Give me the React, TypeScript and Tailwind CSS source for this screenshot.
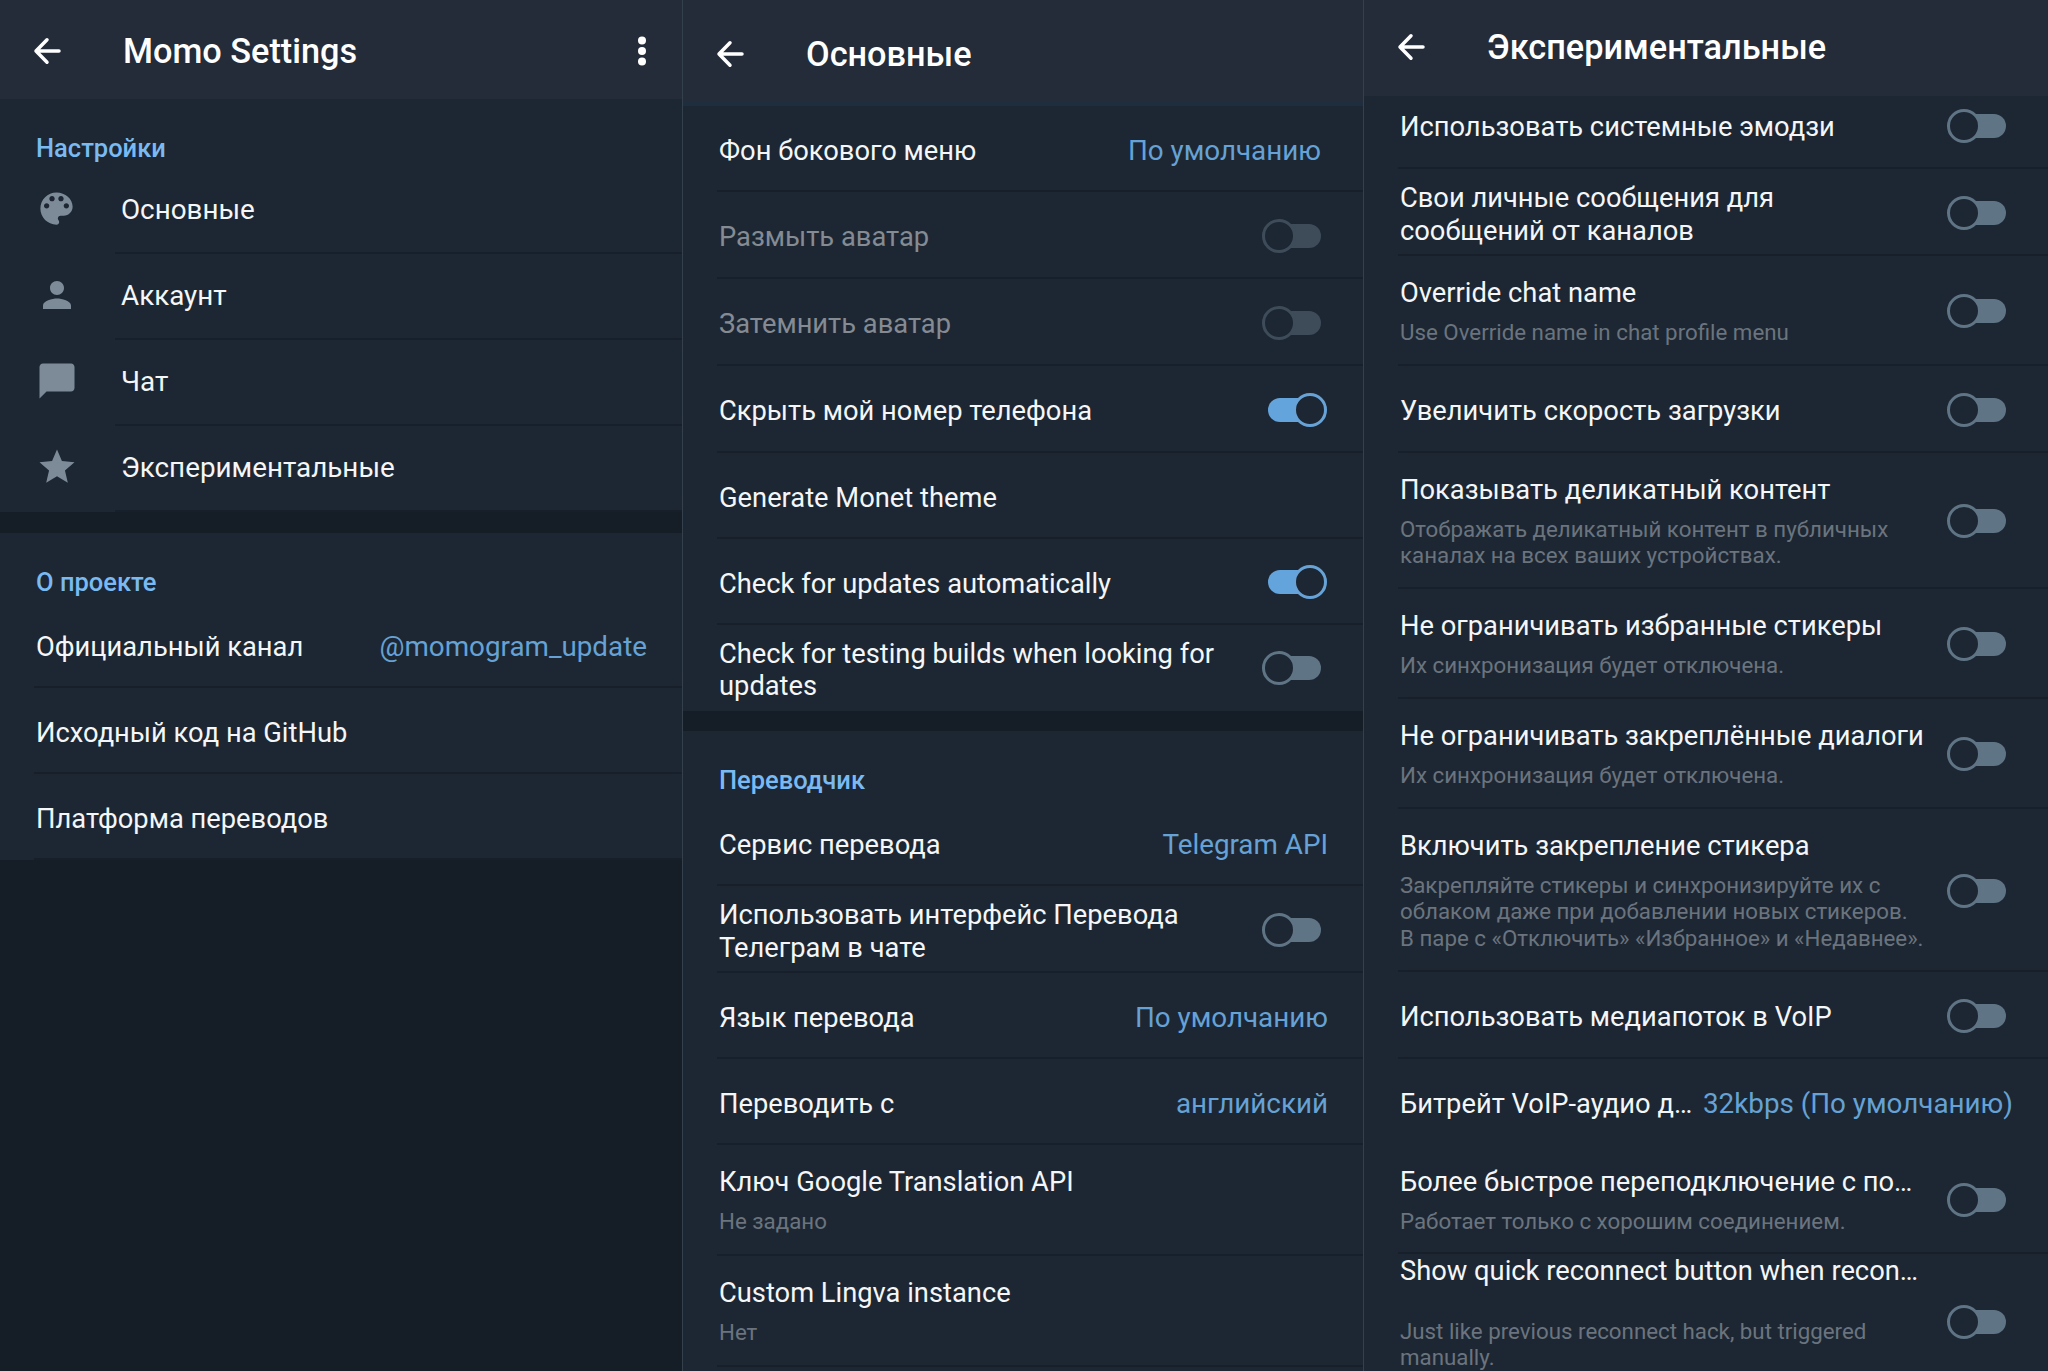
import type { ReactNode } from "react";
import { MdChatBubble, MdPerson, MdStar } from "react-icons/md";

interface Item {
  title: string;
  sub?: string;
  value?: string;
  toggle?: "on" | "off" | "disabled";
  height: string;
  bare?: boolean;
  top?: string;
  gap?: string;
  valueEnd?: string;
}

const mainItems = [
  { label: "Основные", icon: <PaletteIcon /> },
  { label: "Аккаунт", icon: <MdPerson size={42} /> },
  { label: "Чат", icon: <MdChatBubble size={42} /> },
  { label: "Экспериментальные", icon: <MdStar size={42} /> },
];

const aboutItems: Item[] = [
  { title: "Официальный канал", value: "@momogram_update", height: "h-[86px]" },
  { title: "Исходный код на GitHub", height: "h-[86px]" },
  { title: "Платформа переводов", height: "h-[86px]" },
];

const generalItems: Item[] = [
  { title: "Фон бокового меню", value: "По умолчанию", height: "h-[86px]", valueEnd: "mr-[6px]" },
  { title: "Размыть аватар", toggle: "disabled", height: "h-[87px]" },
  { title: "Затемнить аватар", toggle: "disabled", height: "h-[87px]" },
  { title: "Скрыть мой номер телефона", toggle: "on", height: "h-[87px]" },
  { title: "Generate Monet theme", height: "h-[86px]" },
  { title: "Check for updates automatically", toggle: "on", height: "h-[86px]" },
  { title: "Check for testing builds when looking for\nupdates", toggle: "off", height: "h-[86px]", bare: true },
];

const translatorItems: Item[] = [
  { title: "Сервис перевода", value: "Telegram API", height: "h-[86px]" },
  { title: "Использовать интерфейс Перевода\nТелеграм в чате", toggle: "off", height: "h-[87px]" },
  { title: "Язык перевода", value: "По умолчанию", height: "h-[86px]" },
  { title: "Переводить с", value: "английский", height: "h-[86px]" },
  { title: "Ключ Google Translation API", sub: "Не задано", height: "h-[111px]" },
  { title: "Custom Lingva instance", sub: "Нет", height: "h-[111px]" },
];

const experimentalItems: Item[] = [
  { title: "Использовать системные эмодзи", toggle: "off", height: "h-[87px]" },
  { title: "Свои личные сообщения для\nсообщений от каналов", toggle: "off", height: "h-[87px]" },
  { title: "Override chat name", sub: "Use Override name in chat profile menu", toggle: "off", height: "h-[110px]" },
  { title: "Увеличить скорость загрузки", toggle: "off", height: "h-[87px]" },
  {
    title: "Показывать деликатный контент",
    sub: "Отображать деликатный контент в публичных\nканалах на всех ваших устройствах.",
    toggle: "off",
    height: "h-[136px]",
  },
  { title: "Не ограничивать избранные стикеры", sub: "Их синхронизация будет отключена.", toggle: "off", height: "h-[110px]" },
  { title: "Не ограничивать закреплённые диалоги", sub: "Их синхронизация будет отключена.", toggle: "off", height: "h-[110px]" },
  {
    title: "Включить закрепление стикера",
    sub: "Закрепляйте стикеры и синхронизируйте их с\nоблаком даже при добавлении новых стикеров.\nВ паре с «Отключить» «Избранное» и «Недавнее».",
    toggle: "off",
    height: "h-[163px]",
  },
  { title: "Использовать медиапоток в VoIP", toggle: "off", height: "h-[87px]" },
  { title: "Битрейт VoIP-аудио д…", value: "32kbps (По умолчанию)", height: "h-[86px]", bare: true },
  { title: "Более быстрое переподключение с по…", sub: "Работает только с хорошим соединением.", toggle: "off", height: "h-[109px]" },
  {
    title: "Show quick reconnect button when recon…",
    sub: "Just like previous reconnect hack, but triggered\nmanually.",
    toggle: "off",
    height: "h-[136px]",
    top: "pt-px",
    gap: "mt-[30px]",
  },
];

function PaletteIcon() {
  return (
    <svg width="43" height="43" viewBox="0 0 24 24" fill="currentColor">
      <path d="M12 3c-4.97 0-9 4.03-9 9s4.03 9 9 9c.83 0 1.5-.67 1.5-1.5 0-.39-.15-.74-.39-1.01-.23-.26-.38-.61-.38-.99 0-.83.67-1.5 1.5-1.5H16c2.76 0 5-2.24 5-5 0-4.42-4.03-8-9-8zm-5.5 9c-.83 0-1.5-.67-1.5-1.5S5.67 9 6.5 9 8 9.67 8 10.5 7.33 12 6.5 12zm3-4C8.67 8 8 7.33 8 6.5S8.67 5 9.5 5s1.5.67 1.5 1.5S10.33 8 9.5 8zm5 0c-.83 0-1.5-.67-1.5-1.5S13.67 5 14.5 5s1.5.67 1.5 1.5S15.33 8 14.5 8zm3 4c-.83 0-1.5-.67-1.5-1.5S16.67 9 17.5 9s1.5.67 1.5 1.5-.67 1.5-1.5 1.5z" />
    </svg>
  );
}

function BackArrow() {
  return (
    <svg width="28" height="28" viewBox="0 0 28 28" fill="none" stroke="#fff" strokeWidth="3.5" strokeLinecap="round" strokeLinejoin="round">
      <path d="M26 14H3M14 2.8L3 14L14 25.2" />
    </svg>
  );
}

function Switch({ state }: { state: "on" | "off" | "disabled" }) {
  if (state === "on") {
    return (
      <div className="relative flex h-[34px] w-[59px] shrink-0 items-center">
        <div className="h-6 w-11 rounded-full bg-[#64a4dc]" />
        <div className="absolute top-0 right-0 size-[34px] rounded-full border-[3px] border-[#68a3d8] bg-[#1d2733]" />
      </div>
    );
  }
  const track = state === "off" ? "bg-[#5f7485]" : "bg-[#3e4c5a]";
  const ring = state === "off" ? "border-[#5f7485]" : "border-[#3e4c5a]";
  return (
    <div className="relative flex h-[34px] w-[59px] shrink-0 items-center justify-end">
      <div className={`h-6 w-11 rounded-full ${track}`} />
      <div className={`absolute top-0 left-0 size-[34px] rounded-full border-[3px] bg-[#1d2733] ${ring}`} />
    </div>
  );
}

function Header({ title, className, children }: { title: string; className: string; children?: ReactNode }) {
  return (
    <header className={`flex shrink-0 items-center bg-[#242c3a] pl-[33px] ${className}`}>
      <BackArrow />
      <h1 className="ml-[62px] text-[34.3px] leading-10 font-medium text-white">{title}</h1>
      {children}
    </header>
  );
}

function SectionTitle({ children }: { children: ReactNode }) {
  return <h2 className="h-[69px] pt-[33px] pl-9 text-[25.5px] leading-8 font-medium text-[#7abaf2]">{children}</h2>;
}

function Row({ item }: { item: Item }) {
  const color = item.toggle === "disabled" ? "text-[#858b93]" : "text-[#f4f6f8]";
  return (
    <div className={`relative flex shrink-0 pr-9 pl-9 ${item.height} ${item.sub ? "" : "items-center"}`}>
      <div className={item.sub ? (item.top ?? "pt-[21px]") : "pt-1"}>
        <div className={`text-[27.3px] leading-[32.5px] whitespace-pre ${color}`}>{item.title}</div>
        {item.sub && (
          <div className={`text-[22.3px] leading-[26.7px] whitespace-pre text-[#6b747e] ${item.gap ?? "mt-[9px]"}`}>{item.sub}</div>
        )}
      </div>
      {item.value && (
        <div className={`ml-auto pt-1 text-[27.8px] leading-[32.5px] whitespace-pre text-[#66a2d5] ${item.valueEnd ?? "-mr-px"}`}>{item.value}</div>
      )}
      {item.toggle && (
        <div className={`ml-auto self-center ${item.toggle === "on" ? "" : "mr-[6px]"}`}>
          <Switch state={item.toggle} />
        </div>
      )}
      {!item.bare && <div className="absolute right-0 bottom-0 left-[34px] h-0.5 bg-[#171f2a]" />}
    </div>
  );
}

export default function App() {
  return (
    <main className="flex h-[1371px] w-[2048px] overflow-hidden bg-[#151d27] font-[Roboto,sans-serif]">
      {/* Settings root */}
      <section className="flex w-[682px] shrink-0 flex-col">
        <Header title="Momo Settings" className="h-[99px] pt-[3px]">
          <svg className="mr-[35px] ml-auto" width="10" height="32" viewBox="0 0 10 32" fill="#fff">
            <circle cx="5" cy="5.5" r="4" />
            <circle cx="5" cy="16" r="4" />
            <circle cx="5" cy="26.5" r="4" />
          </svg>
        </Header>
        <div className="bg-[#1d2733]">
          <SectionTitle>Настройки</SectionTitle>
          {mainItems.map((item) => (
            <div key={item.label} className="relative flex h-[86px] items-center pb-[3px] text-[27.8px] text-[#f4f6f8]">
              <div className="flex w-[113px] justify-center pb-[2px] text-[#7d8b99]">{item.icon}</div>
              <span className="ml-2">{item.label}</span>
              <div className="absolute right-0 bottom-0 left-[115px] h-0.5 bg-[#171f2a]" />
            </div>
          ))}
        </div>
        <div className="mt-[21px] bg-[#1d2733]">
          <SectionTitle>О проекте</SectionTitle>
          {aboutItems.map((item) => (
            <Row key={item.title} item={item} />
          ))}
        </div>
      </section>

      {/* General */}
      <section className="flex w-[681px] shrink-0 flex-col border-l border-[#35404d]">
        <Header title="Основные" className="h-[106px] border-b-[5px] border-[#1f2e3f] pt-[6px]" />
        <div className="bg-[#1d2733]">
          {generalItems.map((item) => (
            <Row key={item.title} item={item} />
          ))}
        </div>
        <div className="mt-5 flex-1 bg-[#1d2733]">
          <SectionTitle>Переводчик</SectionTitle>
          {translatorItems.map((item) => (
            <Row key={item.title} item={item} />
          ))}
        </div>
      </section>

      {/* Experimental, scrolled under the header */}
      <section className="flex min-w-0 flex-1 flex-col border-l border-[#35404d] bg-[#1d2733]">
        <Header title="Экспериментальные" className="relative z-10 h-[96px] pb-[2px]" />
        <div className="-mt-[14px]">
          {experimentalItems.map((item) => (
            <Row key={item.title} item={item} />
          ))}
        </div>
      </section>
    </main>
  );
}
